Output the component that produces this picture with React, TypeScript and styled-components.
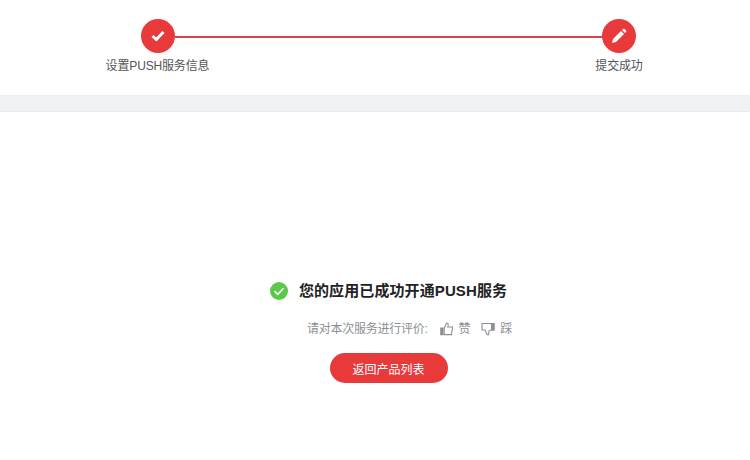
import React from "react";
import styled, { createGlobalStyle } from "styled-components";

const GlobalStyle = createGlobalStyle`
  html, body {
    margin: 0;
    padding: 0;
    background: #fff;
    font-family: "Liberation Sans", "Noto Sans CJK SC", sans-serif;
  }
`;

const Page = styled.div`
  width: 750px;
  height: 460px;
  overflow: hidden;
  background: #fff;
`;

const Steps = styled.div`
  height: 95px;
  display: flex;
  justify-content: space-between;
  padding: 19px 107px 0 106px;
  box-sizing: border-box;
  position: relative;
`;

const StepLine = styled.div`
  position: absolute;
  left: 175px;
  width: 428px;
  top: 36px;
  height: 2px;
  background: #d9434a;
`;

const Step = styled.div`
  display: flex;
  flex-direction: column;
  align-items: center;
  width: ${(p: { $w: number }) => p.$w}px;
`;

const StepCircle = styled.div`
  width: 34px;
  height: 34px;
  border-radius: 50%;
  background: #e8393b;
  display: flex;
  align-items: center;
  justify-content: center;
`;

const StepLabel = styled.div`
  margin-top: 5px;
  font-size: 12px;
  line-height: 16px;
  letter-spacing: -0.15px;
  color: #555;
  white-space: nowrap;
`;

const Band = styled.div`
  height: 15px;
  background: #f1f2f6;
  border-top: 1px solid #eceef0;
  border-bottom: 1px solid #e9eaed;
  box-sizing: content-box;
`;

const Result = styled.div`
  display: flex;
  flex-direction: column;
  align-items: center;
  padding: 167px 0 0 27px;
`;

const Title = styled.div`
  display: flex;
  align-items: center;
  gap: 11px;
  font-size: 15px;
  line-height: 24px;
  letter-spacing: 0.1px;
  font-weight: 700;
  color: #222;
`;

const Rating = styled.div`
  display: flex;
  align-items: center;
  margin: 18px 0 0 42px;
  font-size: 12px;
  line-height: 16px;
  letter-spacing: -0.25px;
  color: #8c8f94;
`;

const Vote = styled.span`
  display: inline-flex;
  align-items: center;
  gap: 5px;
  margin-left: ${(p: { $gap: number }) => p.$gap}px;
`;

const BackButton = styled.button`
  margin-top: 16px;
  width: 118px;
  height: 30px;
  border: 0;
  border-radius: 15px;
  background: #e8393b;
  color: #fff;
  font: inherit;
  font-size: 12px;
`;

const CheckIcon = () => (
  <svg width="14" height="12" viewBox="0 0 14 12">
    <path d="M1.5 6 L5.3 9.5 L12.5 2" fill="none" stroke="#fff" strokeWidth="3" />
  </svg>
);

const PencilIcon = () => (
  <svg width="16" height="16" viewBox="0 0 16 16">
    <path d="M1 15 L2 11 L10 3 L13 6 L5 14 Z" fill="#fff" />
    <path d="M11 2 L12 1 Q12.8 .5 13.5 1 L15 2.5 Q15.5 3.2 15 4 L14 5 Z" fill="#fff" />
  </svg>
);

const SuccessIcon = () => (
  <svg width="18" height="18" viewBox="0 0 18 18">
    <circle cx="9" cy="9" r="9" fill="#5bc84c" />
    <path d="M4.5 9.2 L7.8 12.3 L13.5 6.3" fill="none" stroke="#fff" strokeWidth="1.6" />
  </svg>
);

const ThumbUp = () => (
  <svg width="14" height="14" viewBox="0 0 14 14" fill="none" stroke="#8c8f94" strokeWidth="1.1">
    <path d="M4.2 6 L6.6 1 Q8.4 1 8.2 3 L7.8 5 L12.6 5 L11.4 12.6 L4.2 12.6 Z" />
    <path d="M.8 6 H3 V12.6 H.8 Z" fill="#8c8f94" />
  </svg>
);

const ThumbDown = () => (
  <svg width="14" height="14" viewBox="0 0 14 14" fill="none" stroke="#8c8f94" strokeWidth="1.1">
    <path d="M1 1.5 H13 V8 H10 L8 9 L7.5 12.8 L6 12.8 L4 8 H1 Z" />
    <path d="M10.5 1.5 H13 V8 H10.5 Z" fill="#8c8f94" />
  </svg>
);

const App = () => (
  <Page>
    <GlobalStyle />
    <Steps>
      <StepLine />
      <Step $w={103}>
        <StepCircle>
          <CheckIcon />
        </StepCircle>
        <StepLabel>设置PUSH服务信息</StepLabel>
      </Step>
      <Step $w={48}>
        <StepCircle>
          <PencilIcon />
        </StepCircle>
        <StepLabel>提交成功</StepLabel>
      </Step>
    </Steps>
    <Band />
    <Result>
      <Title>
        <SuccessIcon />
        您的应用已成功开通PUSH服务
      </Title>
      <Rating>
        请对本次服务进行评价:
        <Vote $gap={12}>
          <ThumbUp />赞
        </Vote>
        <Vote $gap={11}>
          <ThumbDown />踩
        </Vote>
      </Rating>
      <BackButton>返回产品列表</BackButton>
    </Result>
  </Page>
);

export default App;
